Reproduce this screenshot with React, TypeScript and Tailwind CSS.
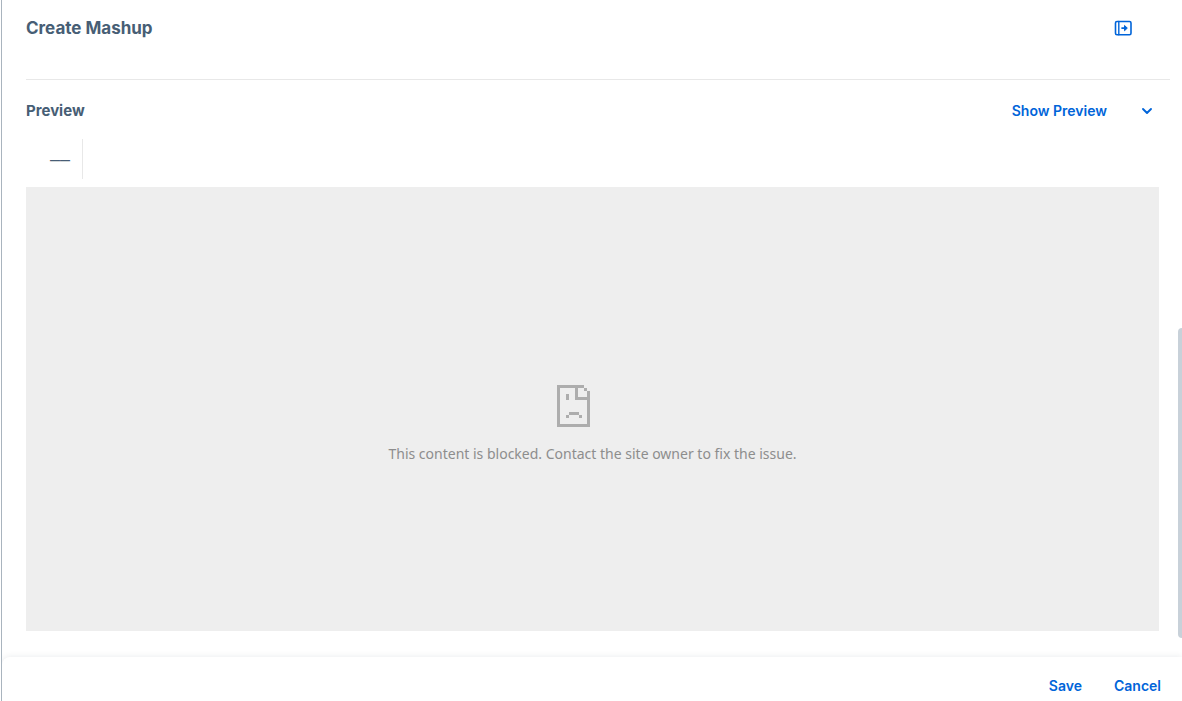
import type { ReactNode } from "react";

const SadPageIcon = () => (
  <svg
    className="h-[42px] w-[33px]"
    viewBox="0 0 33 42"
    fill="#adadad"
    shapeRendering="crispEdges"
    aria-hidden="true"
  >
    <path d="M0 0h27v3h-6v9h9V6h3v36H0zM3 3v36h27V15H18V3z" fillRule="evenodd" />
    <path d="M27 3h3v3h-3zM9 9h3v6H9zM12 27h10v3H12zM9 30h3v3H9zM22 30h3v3h-3z" />
  </svg>
);

const PanelIcon = () => (
  <svg
    className="h-[16px] w-[18px]"
    viewBox="0 0 18 16"
    fill="none"
    stroke="currentColor"
    strokeLinecap="round"
    strokeLinejoin="round"
    aria-hidden="true"
  >
    <rect x="1.5" y="1.5" width="15.5" height="13.3" rx="1.5" strokeWidth="1.6" />
    <path d="M4.8 1.5v13.3" strokeWidth="1.4" />
    <path d="M8 8.1h3" strokeWidth="1.7" />
    <path d="M10.8 5.7l2.5 2.4-2.5 2.4z" fill="currentColor" strokeWidth="1" />
  </svg>
);

const ChevronIcon = () => (
  <svg
    className="h-[8px] w-[12px]"
    viewBox="0 0 12 8"
    fill="none"
    stroke="currentColor"
    strokeWidth="1.9"
    strokeLinecap="round"
    strokeLinejoin="round"
    aria-hidden="true"
  >
    <path d="M2 2l4 4 4-4" />
  </svg>
);

interface TextButtonProps {
  children: ReactNode;
}

const TextButton = ({ children }: TextButtonProps) => (
  <button type="button" className="h-7 cursor-pointer text-sm font-semibold text-[#0064d9]">
    {children}
  </button>
);

const App = () => {
  return (
    <div className="h-screen bg-white pl-px font-[Inter,sans-serif] text-[#475e75]">
      <div className="flex h-full flex-col overflow-hidden border-l border-[#a9b4be]">
        <div className="flex min-h-0 flex-1">
          <main className="flex min-w-0 flex-1 flex-col pl-6">
            <header className="flex h-20 items-start justify-between border-b border-[#e8e8e8] pr-[38px] pt-3.5">
              <h1 className="text-[17px] leading-7 font-bold">Create Mashup</h1>
              <button
                type="button"
                aria-label="Show side panel"
                className="flex h-7 cursor-pointer items-center text-[#0064d9]"
              >
                <PanelIcon />
              </button>
            </header>
            <section className="flex min-h-0 flex-1 flex-col pr-[11px] pb-[26px]">
              <div className="flex items-center justify-between pt-[17px] pr-1.5">
                <h2 className="text-[15px] leading-7 font-bold">Preview</h2>
                <div className="flex items-center gap-[34px] text-[#0064d9]">
                  <TextButton>Show Preview</TextButton>
                  <button
                    type="button"
                    aria-label="More preview options"
                    className="flex h-7 cursor-pointer items-center"
                  >
                    <ChevronIcon />
                  </button>
                </div>
              </div>
              <div className="flex pt-3.5 pb-2">
                <div className="flex h-10 w-[57px] items-center justify-end border-r border-[#e8e8e8] pr-3 font-['Liberation_Sans',sans-serif] text-lg">
                  ––
                </div>
              </div>
              <div className="flex flex-1 flex-col items-center justify-center bg-[#eeeeee] pt-[31px]">
                <div className="w-[72px]">
                  <SadPageIcon />
                </div>
                <p className="mt-[17px] font-['Noto_Sans',sans-serif] text-sm text-[#8d8d8d]">
                  This content is blocked. Contact the site owner to fix the issue.
                </p>
              </div>
            </section>
          </main>
          <div className="flex w-3 flex-col pl-2">
            <div className="flex-[328]" />
            <div className="flex-[310] rounded-l bg-[#c8d1d9]" />
            <div className="flex-[19]" />
          </div>
        </div>
        <footer className="flex h-11 items-end justify-end gap-8 rounded-tl-lg bg-white pr-[21px] pb-px shadow-[0_0_6px_rgba(34,53,72,0.10)]">
          <TextButton>Save</TextButton>
          <TextButton>Cancel</TextButton>
        </footer>
      </div>
    </div>
  );
};

export default App;
